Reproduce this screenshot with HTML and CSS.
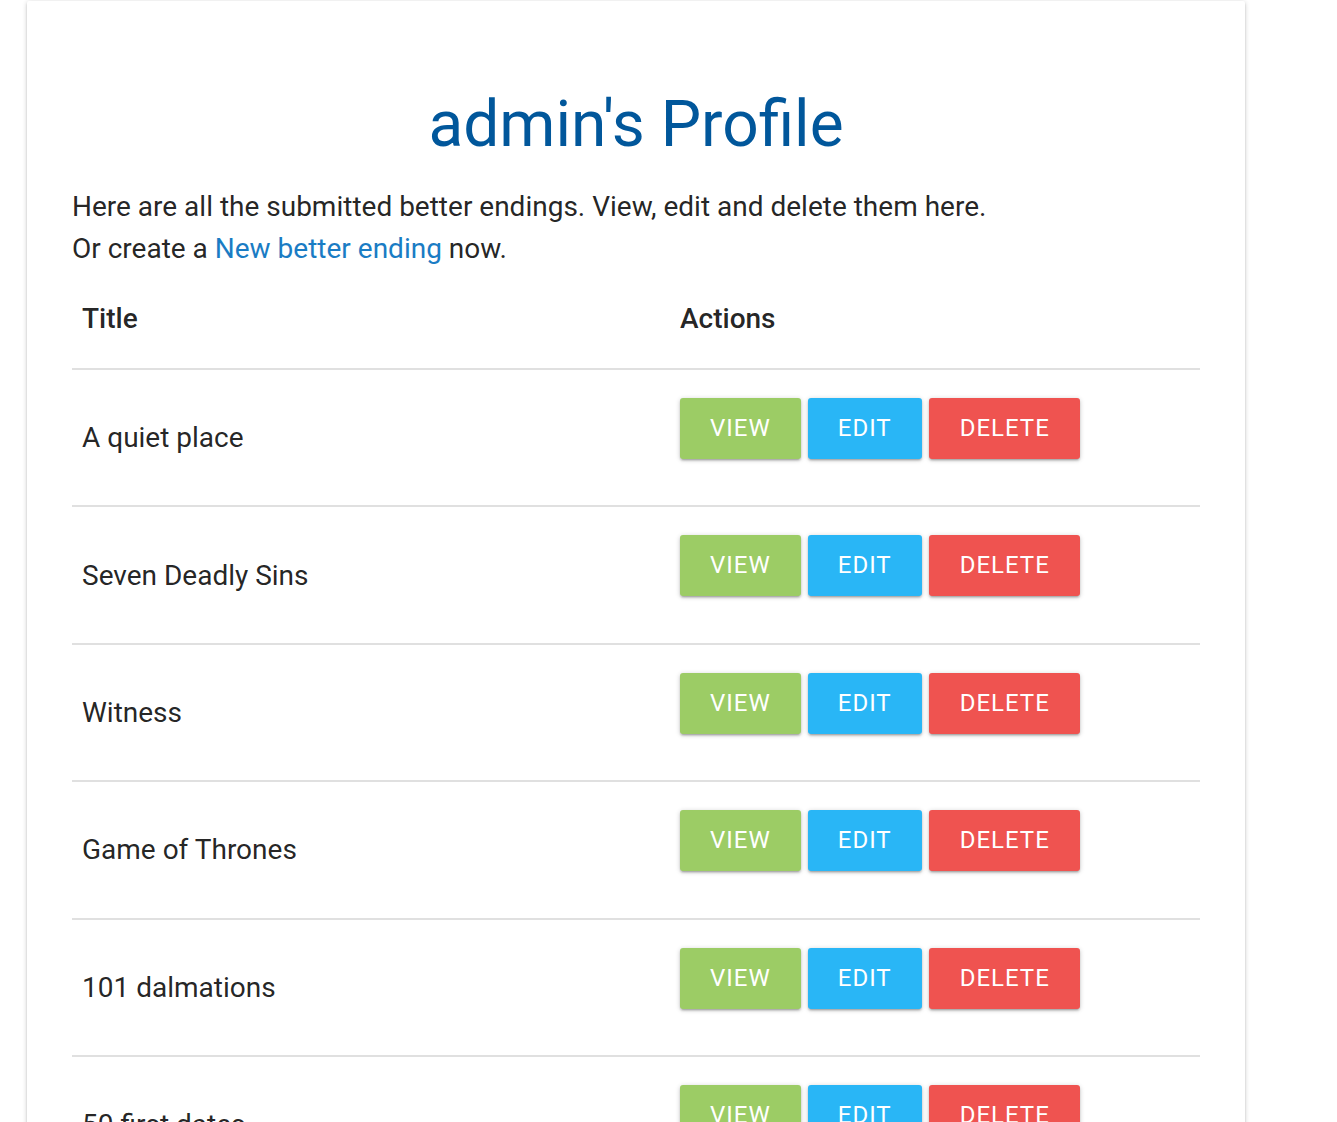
FILE: index.html
```html
<!DOCTYPE html>
<html>
<head>
<meta charset="utf-8">
<link rel="stylesheet" href="styles.css">
</head>
<body>
<div class="card">
  <h1 class="title">admin's Profile</h1>
  <p class="intro">Here are all the submitted better endings. View, edit and delete them here.<br>Or create a <a href="#" class="link">New better ending</a> now.</p>
  <table class="list">
    <thead>
      <tr><th class="col-title">Title</th><th class="col-actions">Actions</th></tr>
    </thead>
    <tbody>
      <tr><td class="name">A quiet place</td><td class="actions"><div class="btns"><a class="btn view">View</a><a class="btn edit">Edit</a><a class="btn del">Delete</a></div></td></tr>
      <tr><td class="name">Seven Deadly Sins</td><td class="actions"><div class="btns"><a class="btn view">View</a><a class="btn edit">Edit</a><a class="btn del">Delete</a></div></td></tr>
      <tr><td class="name">Witness</td><td class="actions"><div class="btns"><a class="btn view">View</a><a class="btn edit">Edit</a><a class="btn del">Delete</a></div></td></tr>
      <tr><td class="name">Game of Thrones</td><td class="actions"><div class="btns"><a class="btn view">View</a><a class="btn edit">Edit</a><a class="btn del">Delete</a></div></td></tr>
      <tr><td class="name">101 dalmations</td><td class="actions"><div class="btns"><a class="btn view">View</a><a class="btn edit">Edit</a><a class="btn del">Delete</a></div></td></tr>
      <tr><td class="name">50 first dates</td><td class="actions"><div class="btns"><a class="btn view">View</a><a class="btn edit">Edit</a><a class="btn del">Delete</a></div></td></tr>
    </tbody>
  </table>
</div>
</body>
</html>
```
FILE: styles.css
```css
html, body {
  margin: 0;
  padding: 0;
  background: #fff;
  font-family: Roboto, "Noto Sans", sans-serif;
  color: rgba(0,0,0,0.87);
  overflow: hidden;
}
.card {
  margin: 1px 0 0 27px;
  width: 1218px;
  box-sizing: border-box;
  padding: 0 45px 40px;
  background: #fff;
  border-radius: 2px;
  box-shadow: 0 2px 2px 0 rgba(0,0,0,.14), 0 3px 1px -2px rgba(0,0,0,.12), 0 1px 5px 0 rgba(0,0,0,.2);
  min-height: 1300px;
}
.title {
  margin: 0;
  padding-top: 84px;
  text-align: center;
  color: #01579b;
  font-weight: 400;
  font-size: 64px;
  line-height: 80px;
}
.intro {
  margin: 21px 0 0;
  font-size: 28px;
  line-height: 42px;
}
.link {
  color: #1a7cc4;
  text-decoration: none;
}
.list {
  width: 100%;
  border-collapse: collapse;
  margin-top: 0;
}
.list th {
  text-align: left;
  font-weight: 500;
  font-size: 28px;
  line-height: 33px;
  padding: 32px 10px 33px;
  border-bottom: 2px solid #e0e0e0;
}
.col-title { width: 578px; }
.list td {
  font-size: 28px;
  padding: 0 10px;
  height: 135.4px;
  border-bottom: 2px solid #e0e0e0;
  vertical-align: middle;
}
.list td.actions {
  vertical-align: top;
}
.btns {
  display: flex;
  gap: 7px;
  margin-top: 28px;
}
.btn {
  display: block;
  height: 61px;
  line-height: 61px;
  padding: 0 30px;
  border-radius: 3px;
  color: #fff;
  text-transform: uppercase;
  font-size: 24px;
  letter-spacing: 1px;
  box-shadow: 0 2px 2px 0 rgba(0,0,0,.14), 0 3px 1px -2px rgba(0,0,0,.12), 0 1px 5px 0 rgba(0,0,0,.2);
}
.view { background: #9ccc65; }
.edit { background: #29b6f6; }
.del { background: #ef5350; padding: 0 30px 0 31px; }
```
